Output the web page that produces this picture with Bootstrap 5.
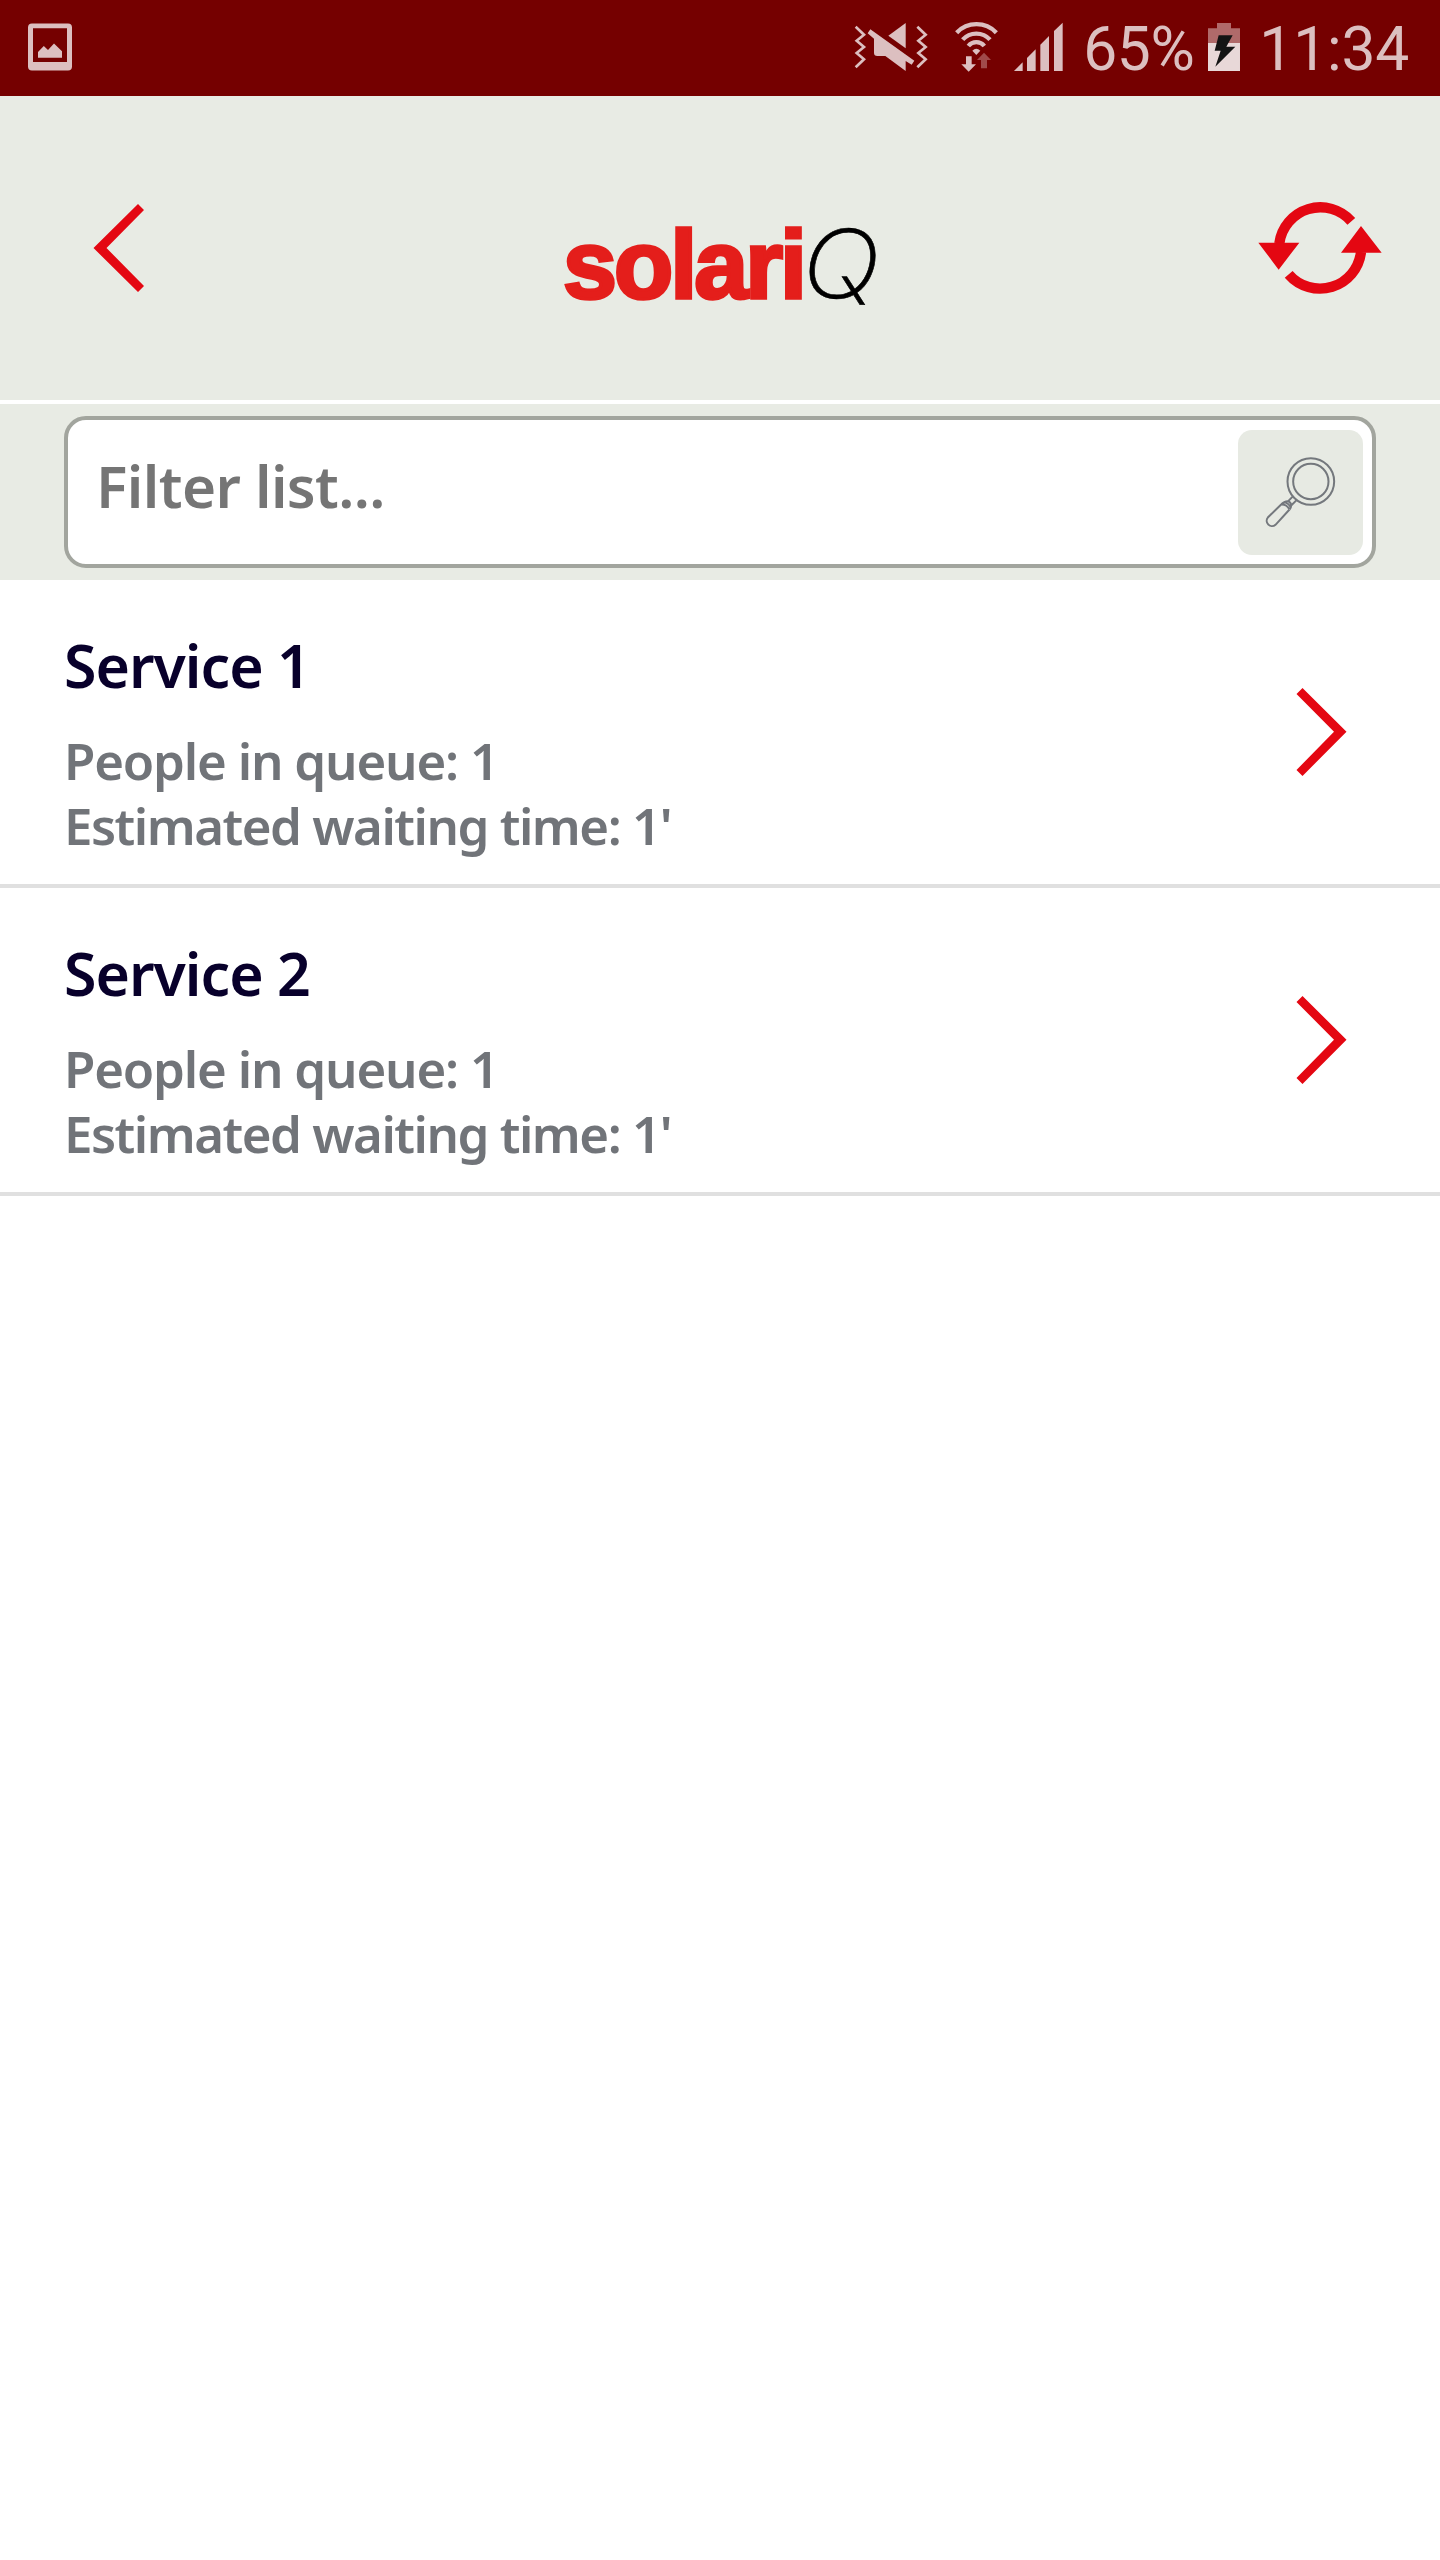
<!DOCTYPE html>
<html lang="en">
<head>
<meta charset="utf-8">
<meta name="viewport" content="width=device-width, initial-scale=1">
<title>solariQ</title>
<link href="https://cdn.jsdelivr.net/npm/bootstrap@5.3.0/dist/css/bootstrap.min.css" rel="stylesheet">
<style>
body{background:#fff;font-family:"Noto Sans",sans-serif;min-height:2560px}
svg{display:block;flex:none}
.statusbar{height:96px;background:#750000;color:#dcbfc0;font:400 60.5px/96px Roboto,sans-serif;padding:0 31px 0 28px}
.battery-level{margin-left:19.5px;letter-spacing:-.4px;padding-top:4px}
.battery-icon{margin-left:14px}
.clock{margin-left:19px;letter-spacing:-.2px;padding-top:4px}
.topbar{height:304px;background:#e8ebe4;padding:0 58px 0 93px}
.brand-logo{margin-left:-33px;overflow:visible}
.icon-btn{background:none;border:0;padding:0}
.filterbar{margin-top:4px;height:176px;background:#e8ebe4;padding:12px 64px}
.filterbox{height:152px;border:4px solid #a2a59e;border-radius:22px;padding:0 9.5px 0 28px}
.filterbox input{font-weight:600;font-size:58.5px;line-height:80px;color:#757575;padding:0 0 15px;letter-spacing:-.6px;height:100%}
.filterbox input::placeholder{color:#757575;opacity:1}
.find{width:125px;height:125px;border-radius:14px;background:#e7eae3}
.service{height:308px;border-bottom:4px solid #e0e0e0;padding:0 93px 0 64px}
.service-info{padding-top:18px}
.service h2{font-weight:600;font-size:59px;line-height:80px;color:#08002b;margin:0 0 23px;letter-spacing:-1px}
.service p{font-weight:600;font-size:51px;line-height:65px;color:#717479;margin:0;letter-spacing:-1.2px}
.service p + p{letter-spacing:-1.5px}
</style>
</head>
<body>
<div class="statusbar d-flex align-items-center">
  <svg width="44" height="96" viewBox="28 0 44 96" fill="#dcbfc0"><path fill-rule="evenodd" d="M32 23.5H68Q72 23.5 72 27.5V66.500Q72 70.500 68 70.500H32Q28 70.500 28 66.500V27.500Q28 23.500 32 23.500ZM33 28.300V62H67V28.300Z"/><path d="M38 52l5.800-6 4.200 4 6-6.500 8 7.800v6.400H38z"/></svg>
  <div class="d-flex align-items-center ms-auto">
    <svg width="210" height="96" viewBox="854 0 210 96" fill="#dcbfc0">
      <g transform="translate(840 0) scale(.33333)">
        <g fill="none" stroke="#dcbfc0" stroke-width="8"><path d="M47 80l25 24-22 18 22 19-22 18 22 19-25 24"/><path d="M232 80l25 24-22 18 22 19-22 18 22 19-25 24"/></g>
        <path d="M197 69V145L145 107Z"/><path d="M91 88L223 182L215 194L197 183V213L136 168H112Q102 168 102 158V116L83 100Z"/>
        <g fill="none" stroke="#dcbfc0" stroke-width="13"><path d="M350 98A82 82 0 0 1 469 98"/><path d="M368 119A55 55 0 0 1 450 119"/><path d="M385 138A31 31 0 0 1 433 138"/></g>
        <path d="M397 152Q409 140 421 152L409 165Z"/><path d="M378 169h17v24h13l-22 22-22-22h14z"/><path fill="#a04b4b" d="M432 158l21 22h-12v25h-18v-25h-12z"/>
        <path d="M522 213l26-26v26zM561 213v-39l26-26v65zM601 213v-79l26-26v105zM642 213V93l26-25v145z"/>
      </g>
    </svg>
    <span class="battery-level">65%</span>
    <svg class="battery-icon" width="32" height="96" viewBox="1207 0 32 96"><g transform="translate(1070 0) scale(.33333)"><path fill="#b06a6a" d="M411 85h27V69h42v16h27v46h-96z"/><path fill="#e8d8d8" d="M411 129h96v84h-96z"/><path fill="#141414" d="M443 106h42l-19 34h27l-60 60 16-48h-18z"/></g></svg>
    <span class="clock">11:34</span>
  </div>
</div>

<header class="topbar d-flex align-items-center justify-content-between">
  <button class="icon-btn" aria-label="Back"><svg width="122" height="100" viewBox="93 198 122 100"><path fill="#e40712" d="M138 204l6 6-37.500 38L144 286l-6 6-44.500-44z"/></svg></button>
  <svg class="brand-logo" width="330" height="160" viewBox="555 168 330 160" role="img" aria-label="solariQ">
    <text x="563" y="298" textLength="244" lengthAdjust="spacing" font-family="Liberation Sans, sans-serif" font-weight="700" font-size="97" fill="#e41e1b" stroke="#e41e1b" stroke-width="3.500">solari</text>
    <text x="802" y="297.500" textLength="78" lengthAdjust="spacingAndGlyphs" font-family="Inter, sans-serif" font-weight="200" font-style="italic" font-size="95" fill="#000" stroke="#000" stroke-width=".6">Q</text>
  </svg>
  <button class="icon-btn" aria-label="Refresh"><svg width="124" height="100" viewBox="1258 198 124 100"><g transform="translate(1240 180) scale(.33333)" fill="#e40712"><g fill="none" stroke="#e40712" stroke-width="31"><path d="M334 124A124 124 0 0 0 118 190"/><path d="M146 283A124 124 0 0 0 363 216"/></g><path d="M55 188h123l-62 81zM303 218h122l-62-80z"/></g></svg></button>
</header>

<div class="filterbar">
  <div class="filterbox bg-white d-flex align-items-center">
    <input class="form-control border-0 shadow-none bg-transparent rounded-0" type="text" placeholder="Filter list..." aria-label="Filter list">
    <button class="icon-btn find flex-shrink-0" aria-label="Search"><svg width="125" height="125" viewBox="1237.500 429.500 125 125"><g transform="translate(1200 380) scale(.33333)" fill="none" stroke="#74787d" stroke-width="6"><circle cx="331" cy="303" r="70"/><circle cx="331" cy="303" r="53"/><path d="M278 347l-15 15M289 358l-17 17M242 372Q252 361 263 362Q273 368 272 376Q272 381 267 387M242 372Q259 371 267 387M242 372L202 411A16 16 0 0 0 225 433L267 387M250 364Q266 369 271 382"/></g></svg></button>
  </div>
</div>

<main>
  <div class="service d-flex align-items-center justify-content-between">
    <div class="service-info"><h2>Service 1</h2><p>People in queue: 1</p><p>Estimated waiting time: 1'</p></div>
    <svg width="51" height="100" viewBox="1296 682 51 100"><path fill="#e40712" d="M1302.500 688l44 43.700-44 44.300-6-6 37.500-38.300-37.500-37.700z"/></svg>
  </div>
  <div class="service d-flex align-items-center justify-content-between">
    <div class="service-info"><h2>Service 2</h2><p>People in queue: 1</p><p>Estimated waiting time: 1'</p></div>
    <svg width="51" height="100" viewBox="1296 682 51 100"><path fill="#e40712" d="M1302.500 688l44 43.700-44 44.300-6-6 37.500-38.300-37.500-37.700z"/></svg>
  </div>
</main>
<script src="https://cdn.jsdelivr.net/npm/bootstrap@5.3.0/dist/js/bootstrap.bundle.min.js"></script>
</body>
</html>
